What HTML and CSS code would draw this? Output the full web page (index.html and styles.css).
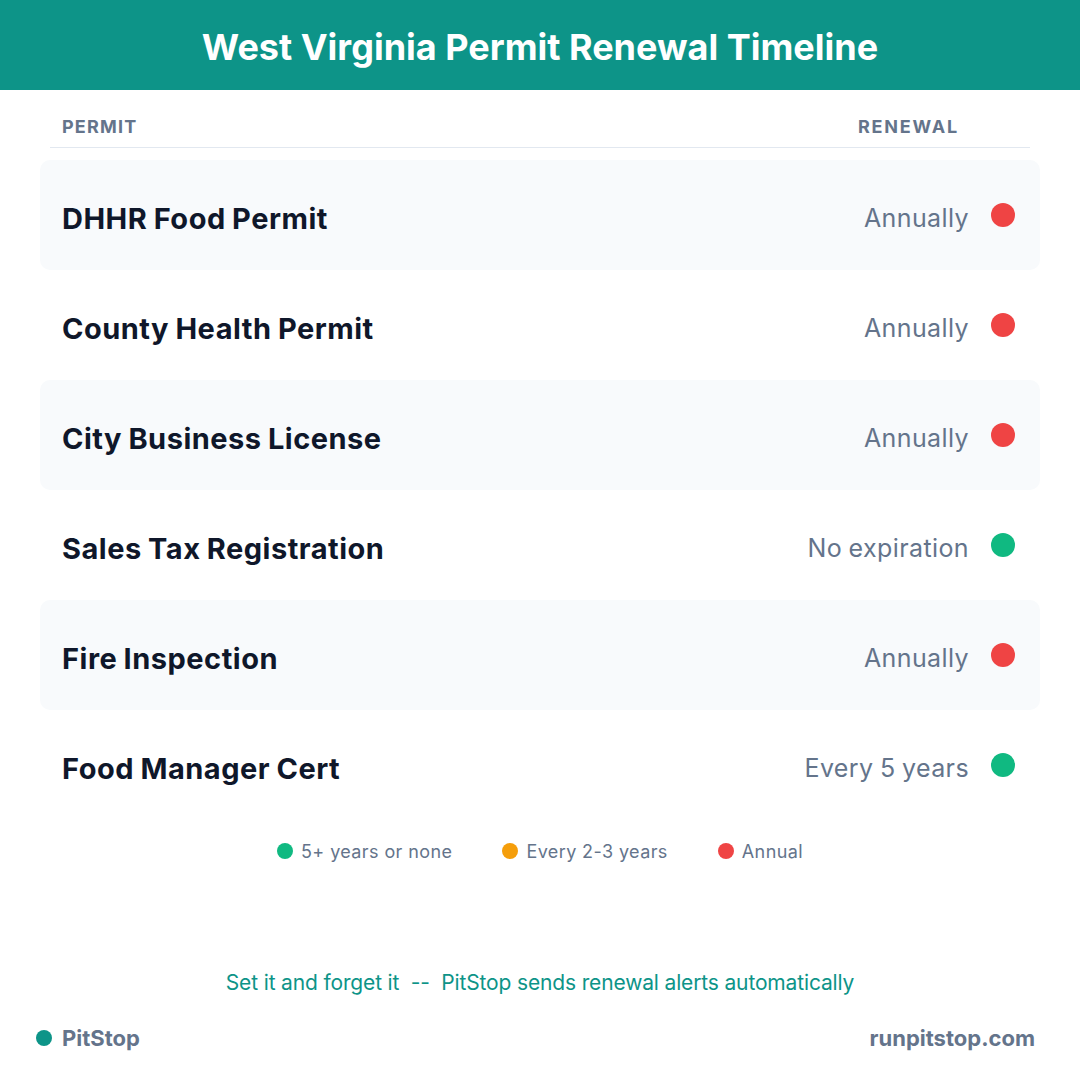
FILE: index.html
```html
<!DOCTYPE html>
<html>
<head>
<meta charset="utf-8">
<link rel="stylesheet" href="styles.css">
</head>
<body>
<div class="page">
  <header class="banner"><h1 class="title">West Virginia Permit Renewal Timeline</h1></header>
  <main class="content">
    <div class="thead">
      <span>PERMIT</span>
      <span class="thead-right">RENEWAL</span>
    </div>
    <div class="rows">
      <div class="row alt"><span class="name">DHHR Food Permit</span><span class="renew">Annually<i class="dot red"></i></span></div>
      <div class="row"><span class="name">County Health Permit</span><span class="renew">Annually<i class="dot red"></i></span></div>
      <div class="row alt"><span class="name">City Business License</span><span class="renew">Annually<i class="dot red"></i></span></div>
      <div class="row"><span class="name">Sales Tax Registration</span><span class="renew">No expiration<i class="dot green"></i></span></div>
      <div class="row alt"><span class="name">Fire Inspection</span><span class="renew">Annually<i class="dot red"></i></span></div>
      <div class="row"><span class="name">Food Manager Cert</span><span class="renew">Every 5 years<i class="dot green"></i></span></div>
    </div>
    <div class="legend">
      <span class="legend-item"><i class="ldot green"></i>5+ years or none</span>
      <span class="legend-item"><i class="ldot orange"></i>Every 2-3 years</span>
      <span class="legend-item"><i class="ldot red"></i>Annual</span>
    </div>
  </main>
  <p class="tagline">Set it and forget it &nbsp;--&nbsp; PitStop sends renewal alerts automatically</p>
  <footer class="footer">
    <span class="brand"><i class="brand-dot"></i>PitStop</span>
    <span class="site">runpitstop.com</span>
  </footer>
</div>
</body>
</html>
```
FILE: styles.css
```css
* { box-sizing: border-box; margin: 0; padding: 0; }
html, body { width: 1080px; height: 1080px; background: #ffffff; }
body { font-family: Inter, "Noto Sans", sans-serif; }
.page { width: 1080px; height: 1080px; display: flex; flex-direction: column; }
.banner { height: 90px; background: #0d9488; display: flex; align-items: center; justify-content: center; padding-top: 4px; }
.title { color: #ffffff; font-size: 36px; font-weight: 700; letter-spacing: 0; }
.content { padding: 0 40px; }
.thead { margin: 0 10px; height: 58px; padding: 0 71px 0 12px; display: flex; justify-content: space-between; align-items: center; padding-top: 16px; border-bottom: 1px solid #e2e8f0; font-size: 18px; font-weight: 700; color: #64748b; letter-spacing: 1.2px; }
.thead-right { letter-spacing: 1.8px; }
.rows { margin-top: 12px; display: flex; flex-direction: column; }
.row { height: 110px; border-radius: 10px; display: flex; align-items: center; justify-content: space-between; padding: 6px 25px 0 22px; }
.row.alt { background: #f8fafc; }
.name { font-size: 29px; font-weight: 700; color: #0f172a; letter-spacing: 0.5px; word-spacing: -1px; }
.renew { display: flex; align-items: center; font-size: 25px; color: #64748b; letter-spacing: 0.4px; word-spacing: -1px; }
.dot { display: inline-block; width: 24px; height: 24px; border-radius: 50%; margin-left: 22px; margin-top: -6px; }
.red { background: #ef4444; }
.green { background: #10b981; }
.orange { background: #f59e0b; }
.legend { display: flex; justify-content: center; gap: 50px; margin-top: 20px; height: 22px; align-items: center; font-size: 18px; color: #64748b; letter-spacing: 0.4px; }
.legend-item { display: flex; align-items: center; }
.ldot { display: inline-block; width: 16px; height: 16px; border-radius: 50%; margin-right: 8px; }
.tagline { margin-top: 109px; text-align: center; font-size: 21px; color: #0d9488; letter-spacing: -0.15px; line-height: 24px; }
.footer { margin-top: 30px; padding: 0 45px 0 36px; display: flex; justify-content: space-between; align-items: center; font-size: 22px; font-weight: 700; color: #64748b; }
.brand { display: flex; align-items: center; }
.brand-dot { display: inline-block; width: 16px; height: 16px; border-radius: 50%; background: #0d9488; margin-right: 10px; }
.site { letter-spacing: 0; }
```
